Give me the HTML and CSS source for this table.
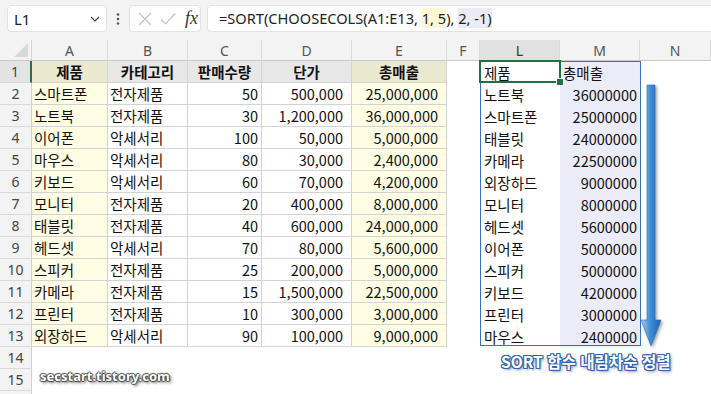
FILE: index.html
```html
<!DOCTYPE html>
<html lang="ko">
<head>
<meta charset="utf-8">
<link rel="stylesheet" href="styles.css">
</head>
<body>
<div class="topbar">
  <div class="namebox"><span>L1</span>
    <svg class="chev" width="10" height="6" viewBox="0 0 10 6"><path d="M1 1 L5 5 L9 1" fill="none" stroke="#444" stroke-width="1.2"/></svg>
  </div>
  <div class="dots"><svg width="4" height="12" viewBox="0 0 4 12"><circle cx="2" cy="1.5" r="1.3" fill="#555"/><circle cx="2" cy="6" r="1.3" fill="#555"/><circle cx="2" cy="10.5" r="1.3" fill="#555"/></svg></div>
  <div class="fxbox">
    <svg width="14" height="14" viewBox="0 0 14 14"><path d="M1 1 L13 13 M13 1 L1 13" stroke="#c4c4c4" stroke-width="1.2" fill="none"/></svg>
    <svg width="16" height="14" viewBox="0 0 16 14"><path d="M1 7.5 L5.5 12 L15 1.5" stroke="#c4c4c4" stroke-width="1.2" fill="none"/></svg>
    <span class="fx">fx</span>
  </div>
  <div class="formula">=SORT(CHOOSECOLS(A1:E13, <span class="hly">1, 5</span>), <span class="hlp">2, -1)</span></div>
</div>

<div class="sheet">
  <div class="corner"><svg width="14" height="14" viewBox="0 0 14 14"><path d="M14 0 L14 14 L0 14 Z" fill="#d9d9d9"/></svg></div>
  <div class="ch">A</div><div class="ch">B</div><div class="ch">C</div><div class="ch">D</div><div class="ch">E</div><div class="ch">F</div><div class="ch sel">L</div><div class="ch">M</div><div class="ch">N</div>

  <div class="spill">
    <div class="sl cur">제품</div><div class="sm">총매출</div>
    <div class="sl">노트북</div><div class="sm n">36000000</div>
    <div class="sl">스마트폰</div><div class="sm n">25000000</div>
    <div class="sl">태블릿</div><div class="sm n">24000000</div>
    <div class="sl">카메라</div><div class="sm n">22500000</div>
    <div class="sl">외장하드</div><div class="sm n">9000000</div>
    <div class="sl">모니터</div><div class="sm n">8000000</div>
    <div class="sl">헤드셋</div><div class="sm n">5600000</div>
    <div class="sl">이어폰</div><div class="sm n">5000000</div>
    <div class="sl">스피커</div><div class="sm n">5000000</div>
    <div class="sl">키보드</div><div class="sm n">4200000</div>
    <div class="sl">프린터</div><div class="sm n">3000000</div>
    <div class="sl">마우스</div><div class="sm n">2400000</div>
  </div>

  <div class="rh rsel">1</div><div class="t hy">제품</div><div class="t hg">카테고리</div><div class="t hg">판매수량</div><div class="t hg">단가</div><div class="t hy">총매출</div><div class="e"></div><div class="e"></div>
  <div class="rh">2</div><div class="t y">스마트폰</div><div class="t">전자제품</div><div class="t n">50</div><div class="t n p">500,000</div><div class="t y n p">25,000,000</div><div class="e"></div><div class="e"></div>
  <div class="rh">3</div><div class="t y">노트북</div><div class="t">전자제품</div><div class="t n">30</div><div class="t n p">1,200,000</div><div class="t y n p">36,000,000</div><div class="e"></div><div class="e"></div>
  <div class="rh">4</div><div class="t y">이어폰</div><div class="t">악세서리</div><div class="t n">100</div><div class="t n p">50,000</div><div class="t y n p">5,000,000</div><div class="e"></div><div class="e"></div>
  <div class="rh">5</div><div class="t y">마우스</div><div class="t">악세서리</div><div class="t n">80</div><div class="t n p">30,000</div><div class="t y n p">2,400,000</div><div class="e"></div><div class="e"></div>
  <div class="rh">6</div><div class="t y">키보드</div><div class="t">악세서리</div><div class="t n">60</div><div class="t n p">70,000</div><div class="t y n p">4,200,000</div><div class="e"></div><div class="e"></div>
  <div class="rh">7</div><div class="t y">모니터</div><div class="t">전자제품</div><div class="t n">20</div><div class="t n p">400,000</div><div class="t y n p">8,000,000</div><div class="e"></div><div class="e"></div>
  <div class="rh">8</div><div class="t y">태블릿</div><div class="t">전자제품</div><div class="t n">40</div><div class="t n p">600,000</div><div class="t y n p">24,000,000</div><div class="e"></div><div class="e"></div>
  <div class="rh">9</div><div class="t y">헤드셋</div><div class="t">악세서리</div><div class="t n">70</div><div class="t n p">80,000</div><div class="t y n p">5,600,000</div><div class="e"></div><div class="e"></div>
  <div class="rh">10</div><div class="t y">스피커</div><div class="t">전자제품</div><div class="t n">25</div><div class="t n p">200,000</div><div class="t y n p">5,000,000</div><div class="e"></div><div class="e"></div>
  <div class="rh">11</div><div class="t y">카메라</div><div class="t">전자제품</div><div class="t n">15</div><div class="t n p">1,500,000</div><div class="t y n p">22,500,000</div><div class="e"></div><div class="e"></div>
  <div class="rh">12</div><div class="t y">프린터</div><div class="t">전자제품</div><div class="t n">10</div><div class="t n p">300,000</div><div class="t y n p">3,000,000</div><div class="e"></div><div class="e"></div>
  <div class="rh">13</div><div class="t y">외장하드</div><div class="t">악세서리</div><div class="t n">90</div><div class="t n p">100,000</div><div class="t y n p">9,000,000</div><div class="e"></div><div class="e"></div>
  <div class="rh">14</div><div class="e"></div><div class="e"></div><div class="e"></div><div class="e"></div><div class="e"></div><div class="e"></div><div class="e"></div><div class="e"></div><div class="e"></div>
  <div class="rh">15</div><div class="e"></div><div class="e"></div><div class="e"></div><div class="e"></div><div class="e"></div><div class="e"></div><div class="e"></div><div class="e"></div><div class="e"></div>
  <div class="rh"></div><div class="e"></div><div class="e"></div><div class="e"></div><div class="e"></div><div class="e"></div><div class="e"></div><div class="e"></div><div class="e"></div><div class="e"></div>
</div>

<svg class="arrow" width="34" height="276" viewBox="0 0 34 276">
  <defs>
    <linearGradient id="g" x1="0" y1="0" x2="1" y2="0">
      <stop offset="0" stop-color="#a9d4f5"/>
      <stop offset="0.45" stop-color="#3f8fd8"/>
      <stop offset="1" stop-color="#1f5fae"/>
    </linearGradient>
    <filter id="sh" x="-50%" y="-5%" width="200%" height="115%">
      <feDropShadow dx="1.5" dy="1.5" stdDeviation="1.8" flood-color="#555" flood-opacity="0.6"/>
    </filter>
  </defs>
  <g filter="url(#sh)">
    <path d="M12 7 L20 7 L20 242 L26 242 L16 268 L6 242 L12 242 Z" fill="url(#g)" stroke="#2a6cbf" stroke-width="0.6"/>
  </g>
</svg>
<div class="note">SORT 함수 내림차순 정렬</div>
<div class="wm">secstart.tistory.com</div>
</body>
</html>
```
FILE: styles.css
```css
* { box-sizing: border-box; }
html, body { margin: 0; padding: 0; }
body {
  width: 711px;
  height: 394px;
  overflow: hidden;
  position: relative;
  background: #f3f3f3;
  font-family: "Noto Sans CJK KR", "Noto Sans", sans-serif;
  color: #111;
}
.topbar {
  height: 40px;
  display: flex;
  align-items: flex-start;
  padding: 5px 0 0 7px;
  overflow: hidden;
}
.topbar > * { flex: none; }
.namebox {
  width: 100px;
  height: 27px;
  background: #fff;
  border: 1px solid #e2e2e2;
  border-radius: 4px;
  display: flex;
  align-items: center;
  justify-content: space-between;
  padding: 0 6px 0 6px;
  font: 15px "Noto Sans", sans-serif;
  color: #222;
}
.dots {
  width: 22px;
  height: 27px;
  display: flex;
  align-items: center;
  justify-content: center;
}
.fxbox {
  width: 72px;
  height: 27px;
  background: #fff;
  border: 1px solid #e2e2e2;
  border-radius: 4px;
  display: flex;
  align-items: center;
  gap: 8px;
  padding-left: 8px;
}
.fx {
  font: italic 18px "Liberation Serif", serif;
  color: #333;
  margin-left: 1px;
}
.formula {
  margin-left: 6px;
  width: 520px;
  height: 27px;
  background: #fff;
  border: 1px solid #e2e2e2;
  border-radius: 4px;
  padding-left: 11px;
  font: 14.6px "Noto Sans", sans-serif;
  line-height: 25px;
  color: #222;
  white-space: nowrap;
}
.hly { background: #fff8d4; }
.hlp { background: #ebebf5; }

.sheet {
  display: grid;
  grid-template-columns: 32px 76px 80px 74px 90px 95px 33px 80px 80px 71px;
  grid-template-rows: 21px repeat(16, 22px);
  background: #fff;
  font-size: 14.5px;
}
.corner {
  background: #f3f3f3;
  border-right: 1px solid #d5d5d5;
  border-bottom: 1px solid #c9c9c9;
  display: flex;
  align-items: flex-end;
  justify-content: flex-end;
  padding: 0 3px 3px 0;
}
.ch {
  background: #f3f3f3;
  border-right: 1px solid #d9d9d9;
  border-bottom: 1px solid #c9c9c9;
  color: #555;
  font: 14px "Noto Sans", sans-serif;
  display: flex;
  align-items: center;
  justify-content: center;
  padding-top: 1px;
}
.ch.sel { background: #e1e1e1; color: #333; }
.rh {
  background: #f3f3f3;
  border-right: 1px solid #d0d0d0;
  border-bottom: 1px solid #dadada;
  color: #444;
  font: 14px "Noto Sans", sans-serif;
  display: flex;
  align-items: center;
  justify-content: center;
}
.rh.rsel { background: #e3e3e3; border-right: 2px solid #217346; }
.t {
  border-right: 1px solid #d3d3d3;
  border-bottom: 1px solid #d3d3d3;
  display: flex;
  align-items: center;
  padding: 0 2px;
  white-space: nowrap;
  overflow: hidden;
  line-height: 21px;
}
.t.n { justify-content: flex-end; padding-right: 3px; }
.t.p { padding-right: 8px; }
.t.y { background: #fffde3; }
.t.hy { background: #eae8cf; font-weight: bold; justify-content: center; }
.t.hg { background: #e7e7e7; font-weight: bold; justify-content: center; }
.e { background: #fff; }

.spill {
  grid-column: 8 / 10;
  grid-row: 2 / 15;
  display: grid;
  grid-template-columns: 80px 80px;
  grid-template-rows: repeat(13, 22px);
  position: relative;
}
.spill::after {
  content: "";
  position: absolute;
  left: 0; top: 0; right: -1px; bottom: 1px;
  border: 1px solid #3b6fc6;
  pointer-events: none;
  z-index: 1;
}
.sl, .sm {
  display: flex;
  align-items: center;
  padding: 0 4px;
  white-space: nowrap;
  line-height: 21px;
}
.sm { background: #ececf8; padding-left: 3px; }
.sm.n { justify-content: flex-end; padding-right: 3px; }
.cur { position: relative; z-index: 2; }
.cur::after {
  content: "";
  position: absolute;
  left: -1px; top: -1px; right: -1px; bottom: 0;
  border: 2px solid #1e7145;
}
.cur::before {
  content: "";
  position: absolute;
  right: -4px; bottom: -3px;
  width: 6px; height: 6px;
  background: #1e7145;
  border: 1px solid #fff;
  z-index: 3;
}

.arrow {
  position: absolute;
  left: 635px;
  top: 78px;
}
.note {
  position: absolute;
  left: 501px;
  top: 350px;
  font: bold 15.6px "Noto Sans CJK KR", sans-serif;
  color: #fff;
  white-space: nowrap;
  text-shadow:
    1px 0 0 #3563ad, -1px 0 0 #3563ad, 0 1px 0 #3563ad, 0 -1px 0 #3563ad,
    1px 1px 0 #3563ad, -1px -1px 0 #3563ad, 1px -1px 0 #3563ad, -1px 1px 0 #3563ad,
    2px 2px 3px rgba(40, 60, 110, 0.6);
}
.wm {
  position: absolute;
  left: 40px;
  top: 367px;
  font: bold 13px "Noto Sans", sans-serif;
  color: #fff;
  white-space: nowrap;
  text-shadow:
    1px 0 1px #444, -1px 0 1px #444, 0 1px 1px #444, 0 -1px 1px #444,
    2px 2px 3px rgba(0, 0, 0, 0.6);
}
```
